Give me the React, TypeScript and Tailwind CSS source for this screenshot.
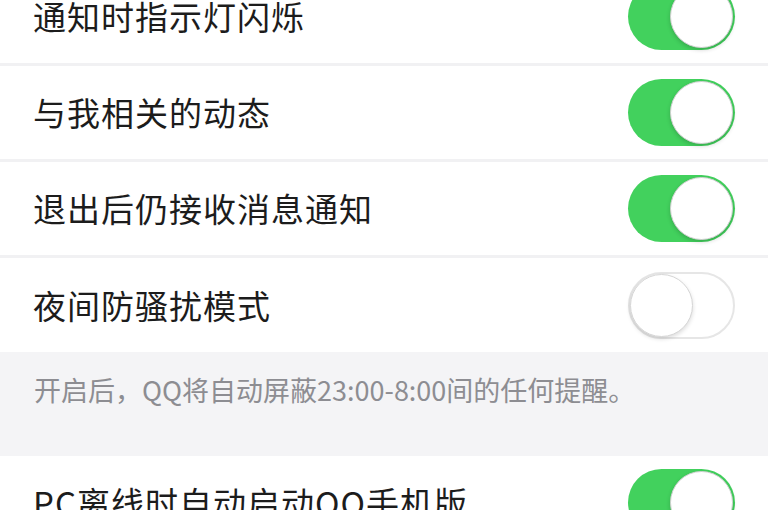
import React from 'react';

type Row = { label: string; on: boolean };

function Toggle({ on }: { on: boolean }) {
  return (
    <div
      className={
        on
          ? 'relative h-[67px] w-[107px] rounded-full bg-[#42d15d]'
          : 'relative h-[67px] w-[107px] rounded-full bg-white border-[2px] border-[#e6e6e6]'
      }
    >
      <div
        className={
          on
            ? 'absolute right-[2px] top-[2px] h-[63px] w-[63px] rounded-full bg-white border border-[#d0d0d0] shadow-[0_2px_4px_rgba(0,0,0,0.18)]'
            : 'absolute left-0 top-0 h-[63px] w-[63px] rounded-full bg-white border border-[#d6d6d6] shadow-[0_2px_4px_rgba(0,0,0,0.14)]'
        }
      />
    </div>
  );
}

function SettingRow({ label, on, last }: Row & { last?: boolean }) {
  return (
    <div
      className={
        last
          ? 'flex h-[94px] items-center justify-between pl-[33px] pr-[33px]'
          : 'flex h-[96px] items-center justify-between pl-[33px] pr-[33px] border-b-[3px] border-[#f1f1f3]'
      }
    >
      <span className="text-[33px] leading-none tracking-[1px] text-[#1c1c1c]">{label}</span>
      <Toggle on={on} />
    </div>
  );
}

export default function App() {
  const rows: Row[] = [
    { label: '通知时指示灯闪烁', on: true },
    { label: '与我相关的动态', on: true },
    { label: '退出后仍接收消息通知', on: true },
    { label: '夜间防骚扰模式', on: false },
  ];
  return (
    <div
      className="h-[510px] w-[768px] overflow-hidden bg-white"
      style={{ fontFamily: '"Noto Sans CJK SC", "Noto Sans", sans-serif' }}
    >
      <div className="-mt-[30px]">
        {rows.map((r, i) => (
          <SettingRow key={r.label} label={r.label} on={r.on} last={i === rows.length - 1} />
        ))}
        <div className="h-[104px] bg-[#f4f4f6] pl-[34px] pt-[22px]">
          <p className="text-[27px] leading-[32px] text-[#8d8d92]">
            开启后，QQ将自动屏蔽23:00-8:00间的任何提醒。
          </p>
        </div>
        <SettingRow label="PC离线时自动启动QQ手机版" on={true} />
      </div>
    </div>
  );
}
